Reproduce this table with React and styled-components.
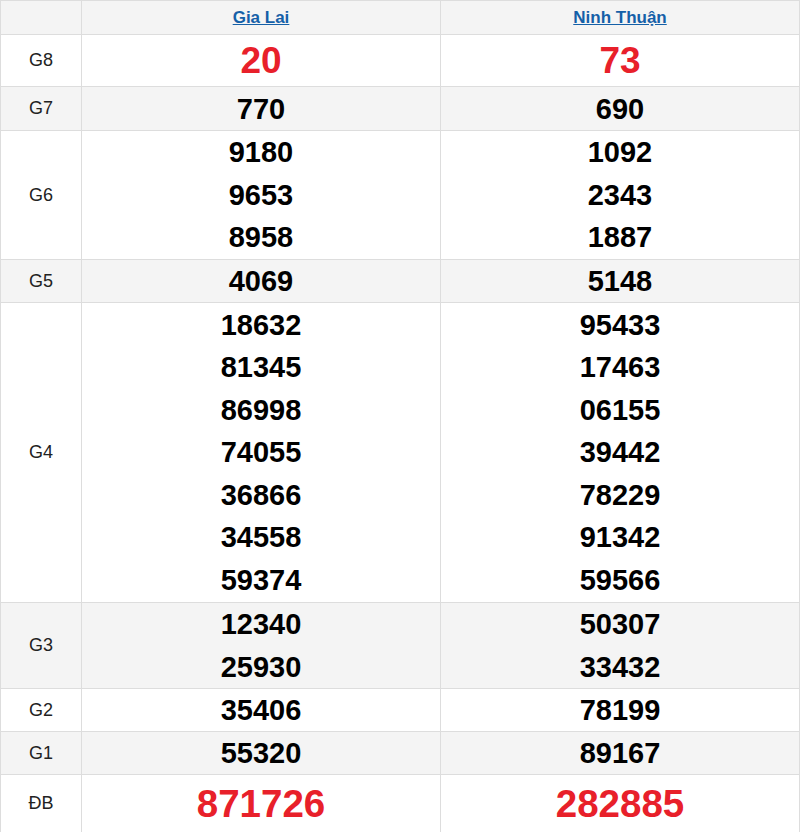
import React from 'react';
import styled, { createGlobalStyle } from 'styled-components';

const GlobalStyle = createGlobalStyle`
  html, body {
    margin: 0;
    padding: 0;
    background: #fff;
    font-family: "Liberation Sans", Arial, sans-serif;
  }
`;

const ResultTable = styled.table`
  width: 800px;
  border-collapse: collapse;
  table-layout: fixed;
  border: 1px solid #ddd;
`;

const Row = styled.tr`
  background: ${(p) => (p.$shade ? '#f4f4f4' : '#fff')};
  height: ${(p) => p.$height}px;
`;

const HeadCell = styled.th`
  border: 1px solid #ddd;
  padding: 0;
  font-size: 17px;
  font-weight: bold;
  text-align: center;
  vertical-align: middle;
`;

const ProvinceLink = styled.a`
  color: #1560a8;
  text-decoration: underline;
  cursor: pointer;
`;

const PrizeLabel = styled.td`
  border: 1px solid #ddd;
  padding: 0;
  font-size: 18px;
  color: #222;
  text-align: center;
  vertical-align: middle;
`;

const NumberCell = styled.td`
  border: 1px solid #ddd;
  padding: 0;
  text-align: center;
  vertical-align: middle;
`;

const Num = styled.div`
  font-weight: bold;
  font-size: ${(p) => p.$size || 29}px;
  line-height: ${(p) => (p.$size ? 48 : p.$multi ? 42.5 : 40)}px;
  color: ${(p) => (p.$red ? '#e8202a' : '#000')};
`;

const provinces = ['Gia Lai', 'Ninh Thuận'];

const prizes = [
  { label: 'G8', h: 52, red: true, size: 37, nums: [['20'], ['73']] },
  { label: 'G7', h: 44, nums: [['770'], ['690']] },
  { label: 'G6', h: 129, nums: [['9180', '9653', '8958'], ['1092', '2343', '1887']] },
  { label: 'G5', h: 43, nums: [['4069'], ['5148']] },
  {
    label: 'G4',
    h: 300,
    nums: [
      ['18632', '81345', '86998', '74055', '36866', '34558', '59374'],
      ['95433', '17463', '06155', '39442', '78229', '91342', '59566'],
    ],
  },
  { label: 'G3', h: 86, nums: [['12340', '25930'], ['50307', '33432']] },
  { label: 'G2', h: 43, nums: [['35406'], ['78199']] },
  { label: 'G1', h: 43, nums: [['55320'], ['89167']] },
  { label: 'ĐB', h: 58, red: true, size: 38.5, nums: [['871726'], ['282885']] },
];

export default function App() {
  return (
    <>
      <GlobalStyle />
      <ResultTable>
        <colgroup>
          <col style={{ width: 81 }} />
          <col style={{ width: 359 }} />
          <col />
        </colgroup>
        <thead>
          <Row $shade $height={34}>
            <HeadCell />
            {provinces.map((p) => (
              <HeadCell key={p}>
                <ProvinceLink>{p}</ProvinceLink>
              </HeadCell>
            ))}
          </Row>
        </thead>
        <tbody>
          {prizes.map((prize, i) => (
            <Row key={prize.label} $shade={i % 2 === 1} $height={prize.h}>
              <PrizeLabel>{prize.label}</PrizeLabel>
              {prize.nums.map((list, j) => (
                <NumberCell key={j}>
                  {list.map((n) => (
                    <Num
                      key={n}
                      $red={prize.red}
                      $size={prize.size}
                      $multi={list.length > 1}
                    >
                      {n}
                    </Num>
                  ))}
                </NumberCell>
              ))}
            </Row>
          ))}
        </tbody>
      </ResultTable>
    </>
  );
}
